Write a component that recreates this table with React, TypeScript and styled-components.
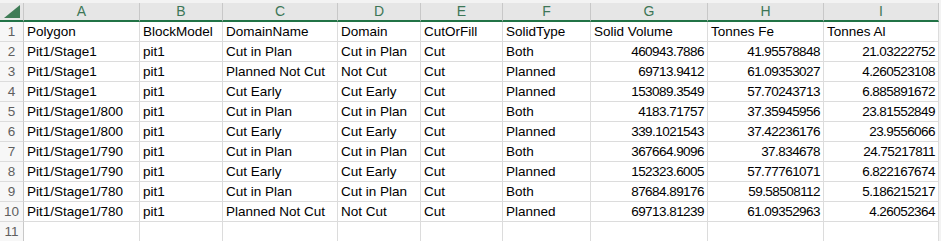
import React from "react";
import styled, { createGlobalStyle } from "styled-components";

const GlobalStyle = createGlobalStyle`
  html, body {
    margin: 0;
    padding: 0;
    background: #f3f3f3;
  }
  body {
    font-family: "Liberation Sans", Arial, sans-serif;
  }
`;

const columns = ["A", "B", "C", "D", "E", "F", "G", "H", "I"];
const widths = [24, 116, 83, 115, 83, 82, 88, 117, 116, 115];

const rows: string[][] = [
  ["Polygon", "BlockModel", "DomainName", "Domain", "CutOrFill", "SolidType", "Solid Volume", "Tonnes Fe", "Tonnes Al"],
  ["Pit1/Stage1", "pit1", "Cut in Plan", "Cut in Plan", "Cut", "Both", "460943.7886", "41.95578848", "21.03222752"],
  ["Pit1/Stage1", "pit1", "Planned Not Cut", "Not Cut", "Cut", "Planned", "69713.9412", "61.09353027", "4.260523108"],
  ["Pit1/Stage1", "pit1", "Cut Early", "Cut Early", "Cut", "Planned", "153089.3549", "57.70243713", "6.885891672"],
  ["Pit1/Stage1/800", "pit1", "Cut in Plan", "Cut in Plan", "Cut", "Both", "4183.71757", "37.35945956", "23.81552849"],
  ["Pit1/Stage1/800", "pit1", "Cut Early", "Cut Early", "Cut", "Planned", "339.1021543", "37.42236176", "23.9556066"],
  ["Pit1/Stage1/790", "pit1", "Cut in Plan", "Cut in Plan", "Cut", "Both", "367664.9096", "37.834678", "24.75217811"],
  ["Pit1/Stage1/790", "pit1", "Cut Early", "Cut Early", "Cut", "Planned", "152323.6005", "57.77761071", "6.822167674"],
  ["Pit1/Stage1/780", "pit1", "Cut in Plan", "Cut in Plan", "Cut", "Both", "87684.89176", "59.58508112", "5.186215217"],
  ["Pit1/Stage1/780", "pit1", "Planned Not Cut", "Not Cut", "Cut", "Planned", "69713.81239", "61.09352963", "4.26052364"],
  ["", "", "", "", "", "", "", "", ""],
];

const isNumber = (v: string) => v !== "" && !isNaN(Number(v));

export default function App() {
  return (
    <>
      <GlobalStyle />
      <Sheet>
        <Corner>
          <SelectAll viewBox="0 0 16 13">
            <polygon points="16,0 16,13 0,13" fill="#3f7c56" />
          </SelectAll>
        </Corner>
        {columns.map((c) => (
          <ColHeader key={c}>{c}</ColHeader>
        ))}
        {rows.map((row, r) => (
          <React.Fragment key={r}>
            <RowHeader>{r + 1}</RowHeader>
            {row.map((v, i) => (
              <Cell key={i} $numeric={isNumber(v)}>
                {v}
              </Cell>
            ))}
          </React.Fragment>
        ))}
      </Sheet>
    </>
  );
}

const Sheet = styled.div`
  display: grid;
  grid-template-columns: ${widths.map((w) => `${w}px`).join(" ")};
  grid-template-rows: 19px;
  grid-auto-rows: 20px;
  margin-top: 3px;
  width: max-content;
  background: #ffffff;
`;

const Corner = styled.div`
  box-sizing: border-box;
  background: #e6e6e6;
  border-right: 1px solid #c8c8c8;
  border-bottom: 2px solid #217346;
  display: flex;
  align-items: flex-end;
  justify-content: flex-end;
  padding: 0 3px 2px 0;
`;

const SelectAll = styled.svg`
  width: 16px;
  height: 13px;
  display: block;
`;

const ColHeader = styled.div`
  box-sizing: border-box;
  background: #e6e6e6;
  border-right: 1px solid #c8c8c8;
  border-bottom: 2px solid #217346;
  color: #3d7656;
  font-size: 14px;
  display: flex;
  align-items: center;
  justify-content: center;
  padding-bottom: 1px;
`;

const RowHeader = styled.div`
  box-sizing: border-box;
  background: #f7f7f7;
  border-right: 1px solid #c8c8c8;
  border-bottom: 1px solid #dcdcdc;
  color: #5f5f5f;
  font-size: 13.5px;
  display: flex;
  align-items: center;
  justify-content: center;
`;

const Cell = styled.div<{ $numeric: boolean }>`
  box-sizing: border-box;
  border-right: 1px solid #dcdcdc;
  border-bottom: 1px solid #dcdcdc;
  padding: ${(p) => (p.$numeric ? "0 3px 0 0" : "0 0 0 3px")};
  text-align: ${(p) => (p.$numeric ? "right" : "left")};
  letter-spacing: ${(p) => (p.$numeric ? "-0.55px" : "0")};
  color: #000000;
  font-size: 13.5px;
  line-height: 20px;
  white-space: nowrap;
  overflow: hidden;
`;
